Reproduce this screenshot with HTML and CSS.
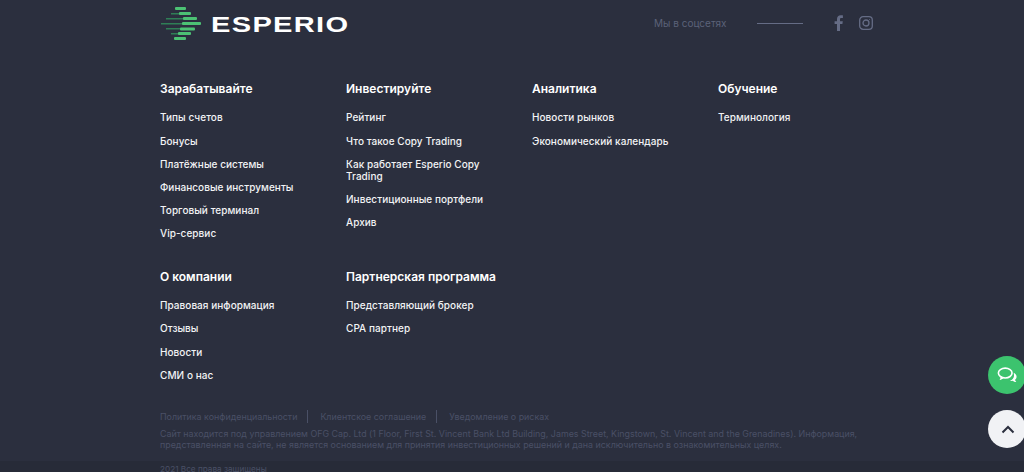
FILE: index.html
```html
<!DOCTYPE html>
<html lang="ru">
<head>
    <meta charset="UTF-8">
    <meta name="viewport" content="width=device-width, initial-scale=1.0">
    <title>Esperio</title>
    <link rel="stylesheet" href="styles.css">
</head>
<body>
    <footer class="footer">
        <div class="footer-top">
            <a class="logo" href="#">
                <svg class="logo-mark" width="42" height="34" viewBox="0 0 42 34">
                    <g fill="#2f7f56">
                        <rect x="11" y="7" width="10" height="1.500"/>
                        <rect x="6" y="12" width="19" height="1.500"/>
                        <rect x="1" y="17" width="23" height="1.500"/>
                        <rect x="6" y="22" width="16" height="1.500"/>
                        <rect x="11" y="27" width="9" height="1.500"/>
                    </g>
                    <g fill="#4cc274">
                        <rect x="15" y="1" width="11" height="3" rx="1"/>
                        <rect x="19" y="6" width="12" height="3" rx="1"/>
                        <rect x="23" y="11" width="14" height="3" rx="1"/>
                        <rect x="22" y="16" width="19" height="3" rx="1"/>
                        <rect x="20" y="21.500" width="15" height="3" rx="1"/>
                        <rect x="18" y="26" width="13" height="3" rx="1"/>
                        <rect x="14" y="31" width="12" height="3" rx="1"/>
                    </g>
                </svg>
                <span class="logo-text">ESPERIO</span>
            </a>
            <div class="socials">
                <span class="socials-label">Мы в соцсетях</span>
                <span class="socials-line"></span>
                <a class="social-icon" href="#">
                    <svg width="10" height="16" viewBox="0 0 10 16"><path fill="#656c85" d="M3 16V9H.6V6.200H3V4.100C3 1.600 4.500.3 6.700.3c1 0 1.900.1 2.200.1v2.500H7.400c-1.200 0-1.400.6-1.400 1.400v1.900h2.800L8.400 9H6v7z"/></svg>
                </a>
                <a class="social-icon" href="#">
                    <svg width="14" height="14" viewBox="0 0 14 14" fill="none" stroke="#656c85" stroke-width="1.300"><rect x=".7" y=".7" width="12.600" height="12.600" rx="3.400"/><circle cx="7" cy="7" r="3"/><circle cx="10.600" cy="3.400" r=".5" fill="#656c85" stroke="none"/></svg>
                </a>
            </div>
        </div>

        <div class="menu">
            <div class="menu-col">
                <h4>Зарабатывайте</h4>
                <a href="#">Типы счетов</a>
                <a href="#">Бонусы</a>
                <a href="#">Платёжные системы</a>
                <a href="#">Финансовые инструменты</a>
                <a href="#">Торговый терминал</a>
                <a href="#">Vip-сервис</a>
            </div>
            <div class="menu-col">
                <h4>Инвестируйте</h4>
                <a href="#">Рейтинг</a>
                <a href="#">Что такое Copy Trading</a>
                <a href="#">Как работает Esperio Copy Trading</a>
                <a href="#">Инвестиционные портфели</a>
                <a href="#">Архив</a>
            </div>
            <div class="menu-col">
                <h4>Аналитика</h4>
                <a href="#">Новости рынков</a>
                <a href="#">Экономический календарь</a>
            </div>
            <div class="menu-col">
                <h4>Обучение</h4>
                <a href="#">Терминология</a>
            </div>
            <div class="menu-col">
                <h4>О компании</h4>
                <a href="#">Правовая информация</a>
                <a href="#">Отзывы</a>
                <a href="#">Новости</a>
                <a href="#">СМИ о нас</a>
            </div>
            <div class="menu-col">
                <h4>Партнерская программа</h4>
                <a href="#">Представляющий брокер</a>
                <a href="#">CPA партнер</a>
            </div>
        </div>

        <div class="legal">
            <div class="legal-links">
                <a href="#">Политика конфиденциальности</a>
                <a href="#">Клиентское соглашение</a>
                <a href="#">Уведомление о рисках</a>
            </div>
            <p>Сайт находится под управлением OFG Cap. Ltd (1 Floor, First St. Vincent Bank Ltd Building, James Street, Kingstown, St. Vincent and the Grenadines). Информация, представленная на сайте, не является основанием для принятия инвестиционных решений и дана исключительно в ознакомительных целях.</p>
        </div>

        <div class="copyright">
            <span>2021 Все права защищены</span>
        </div>
    </footer>

    <a class="float-btn chat-btn" href="#">
        <svg width="20" height="16" viewBox="0 0 22 18">
            <path fill="#fff" d="M18.500 6.500c2 1 3.300 2.600 3.300 4.400 0 1.300-.7 2.500-1.800 3.400.2.900.8 1.700 1.500 2.700-1.700-.1-3.100-.8-4.100-1.600-1 .3-2 .4-3.100.3 2.800-1.100 4.600-3.300 4.600-5.800 0-1-.1-2.400-.4-3.400z"/>
            <ellipse cx="9" cy="6.800" rx="7.700" ry="5.500" fill="none" stroke="#fff" stroke-width="1.800"/>
            <path fill="#fff" d="M4 10.500l3 1.500c-1 1.500-2.500 2.300-4.300 2.500.7-1 1.200-2.500 1.300-4z"/>
        </svg>
    </a>
    <a class="float-btn top-btn" href="#">
        <svg width="14" height="9" viewBox="0 0 14 9" fill="none" stroke="#2b2f3e" stroke-width="2"><path d="M1.500 7.500L7 2l5.500 5.500"/></svg>
    </a>
</body>
</html>
```

FILE: styles.css
```css
body {
    margin: 0;
    height: 472px;
    overflow: hidden;
    background-color: #2b2f3e;
    font-family: "Inter", "Noto Sans", sans-serif;
    color: #f2f3f5;
}
a {
    color: inherit;
    text-decoration: none;
}
.footer {
    height: 472px;
    display: flex;
    flex-direction: column;
}
.footer > * {
    flex-shrink: 0;
}
.footer-top {
    height: 46px;
    margin-left: 160px;
    width: 714px;
    display: flex;
    justify-content: space-between;
    align-items: center;
}
.logo {
    display: flex;
    align-items: center;
    gap: 9px;
}
.logo-text {
    padding-top: 3px;
    font-family: "Liberation Sans", sans-serif;
    font-size: 22px;
    font-weight: 700;
    letter-spacing: 1px;
    color: #fff;
    transform: scaleX(1.32);
    transform-origin: left center;
}
.socials {
    display: flex;
    align-items: center;
}
.socials-label {
    font-size: 10px;
    color: #5b6279;
    width: 103px;
}
.socials-line {
    width: 46px;
    height: 1px;
    background-color: #656c85;
    margin-right: 31px;
}
.social-icon {
    display: flex;
    margin-right: 15px;
}
.social-icon:last-child {
    margin-right: 1px;
}
.menu {
    margin: 35px 0 0 160px;
    display: grid;
    grid-template-columns: repeat(4, 186px);
    row-gap: 29.6px;
}
.menu-col {
    display: flex;
    flex-direction: column;
    gap: 11.2px;
    padding-right: 30px;
}
.menu-col h4 {
    margin: 0 0 3.2px;
    font-size: 12px;
    line-height: 16px;
    font-weight: 600;
    color: #fff;
}
.menu-col a {
    font-size: 10px;
    line-height: 12px;
    font-weight: 500;
    letter-spacing: 0.05px;
}
.menu-col:nth-child(5) {
    grid-column: 1;
}
.legal {
    margin: 29.5px 0 0 160px;
    width: 705px;
    font-size: 8.9px;
    color: #4a5066;
}
.legal-links {
    display: flex;
    line-height: 13px;
}
.legal-links a {
    padding-right: 10px;
    margin-right: 12px;
    border-right: 1px solid #4a5066;
}
.legal-links a:last-child {
    border-right: none;
}
.legal p {
    margin: 6px 0 0;
    line-height: 10.5px;
}
.copyright {
    margin-top: 10.5px;
    flex: 1 0 auto;
    background-color: #272b38;
    padding: 3px 0 0 160px;
    font-size: 8.2px;
    color: #4a5066;
}
.float-btn {
    position: fixed;
    right: -2px;
    width: 38px;
    height: 38px;
    border-radius: 50%;
    display: flex;
    align-items: center;
    justify-content: center;
}
.chat-btn {
    top: 356px;
    background-color: #3cc36e;
}
.top-btn {
    top: 410px;
    background-color: #f1f2f5;
    padding-left: 2px;
    box-sizing: border-box;
}
```
